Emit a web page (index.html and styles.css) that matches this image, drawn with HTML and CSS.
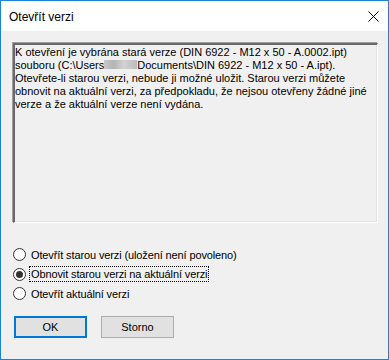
FILE: index.html
```html
<!DOCTYPE html>
<html>

<head>
    <meta charset="utf-8" />
    <title>Otevřít verzi</title>
    <link rel="stylesheet" href="styles.css">
</head>

<body>

<div class="window">
    <div class="titlebar">
        <span class="title">Otevřít verzi</span>
        <span class="close">
            <svg width="11" height="11" viewBox="0 0 11 11">
                <path d="M0.5 0.5 L10.5 10.5 M10.5 0.5 L0.5 10.5" stroke="#000" stroke-width="1" fill="none"/>
            </svg>
        </span>
    </div>
    <div class="content">
        <div class="message">
            K otevření je vybrána stará verze (DIN 6922 - M12 x 50 - A.0002.ipt)
            souboru (C:\Users<span class="blur"></span>Documents\DIN 6922 - M12 x 50 - A.ipt).
            Otevřete-li starou verzi, nebude ji možné uložit. Starou verzi můžete
            obnovit na aktuální verzi, za předpokladu, že nejsou otevřeny žádné jiné
            verze a že aktuální verze není vydána.
        </div>
        <ul class="options">
            <li><span class="radio"></span><span class="label">Otevřít starou verzi (uložení není povoleno)</span></li>
            <li><span class="radio checked"></span><span class="label focus">Obnovit starou verzi na aktuální verzi</span></li>
            <li><span class="radio"></span><span class="label">Otevřít aktuální verzi</span></li>
        </ul>
        <div class="buttons">
            <span class="btn default">OK</span>
            <span class="btn">Storno</span>
        </div>
    </div>
</div>

</body>

</html>
```

FILE: styles.css
```css
* {
    padding: 0;
    margin: 0;
    list-style: none;
    box-sizing: border-box;
}

body {
    background: #fff;
    font-family: "Liberation Sans", Arial, sans-serif;
    font-size: 11px;
    color: #000;
}

.window {
    width: 389px;
    height: 360px;
    border: 1px solid #1883d7;
    background: #f0f0f0;
    display: flex;
    flex-direction: column;
}

.titlebar {
    height: 30px;
    background: #fff;
    display: flex;
    align-items: center;
    justify-content: space-between;
    padding: 0 9px 0 8px;
}

.title {
    font-size: 12px;
    padding-top: 1px;
}

.close {
    display: flex;
}

.content {
    padding: 12px 11px 0 11px;
}

.message {
    height: 180px;
    width: 365px;
    border-style: solid;
    border-width: 2px 1px 1px 2px;
    border-color: #696969 #fff #fff #696969;
    box-shadow: inset -1px -1px 0 #e3e3e3, -1px -1px 0 #a0a0a0;
    padding: 1px 0 0 0;
    line-height: 13px;
    margin-left: 1px;
}

.blur {
    display: inline-block;
    width: 33px;
    height: 9px;
    vertical-align: 0;
    background: linear-gradient(90deg, #c8c8c8, #b4b4b4 30%, #d2d2d2 60%, #bcbcbc);
}

.options {
    margin-top: 22px;
    letter-spacing: -0.12px;
}

.options li {
    height: 19.5px;
    display: flex;
    align-items: center;
}

.radio {
    width: 13px;
    height: 13px;
    border: 1px solid #333;
    border-radius: 50%;
    background: #fff;
    margin-left: 1px;
    margin-right: 3px;
    position: relative;
}

.radio.checked::after {
    content: "";
    position: absolute;
    left: 2px;
    top: 2px;
    width: 7px;
    height: 7px;
    border-radius: 50%;
    background: #333;
}

.label {
    padding: 1px 1px;
    border: 1px dotted transparent;
}

.label.focus {
    border-color: #000;
}

.buttons {
    margin-top: 12px;
    display: flex;
    gap: 14px;
    padding-left: 2px;
}

.btn {
    width: 73px;
    height: 22px;
    background: #e1e1e1;
    border: 1px solid #adadad;
    display: flex;
    align-items: center;
    justify-content: center;
}

.btn.default {
    border: 2px solid #0078d7;
}
```
